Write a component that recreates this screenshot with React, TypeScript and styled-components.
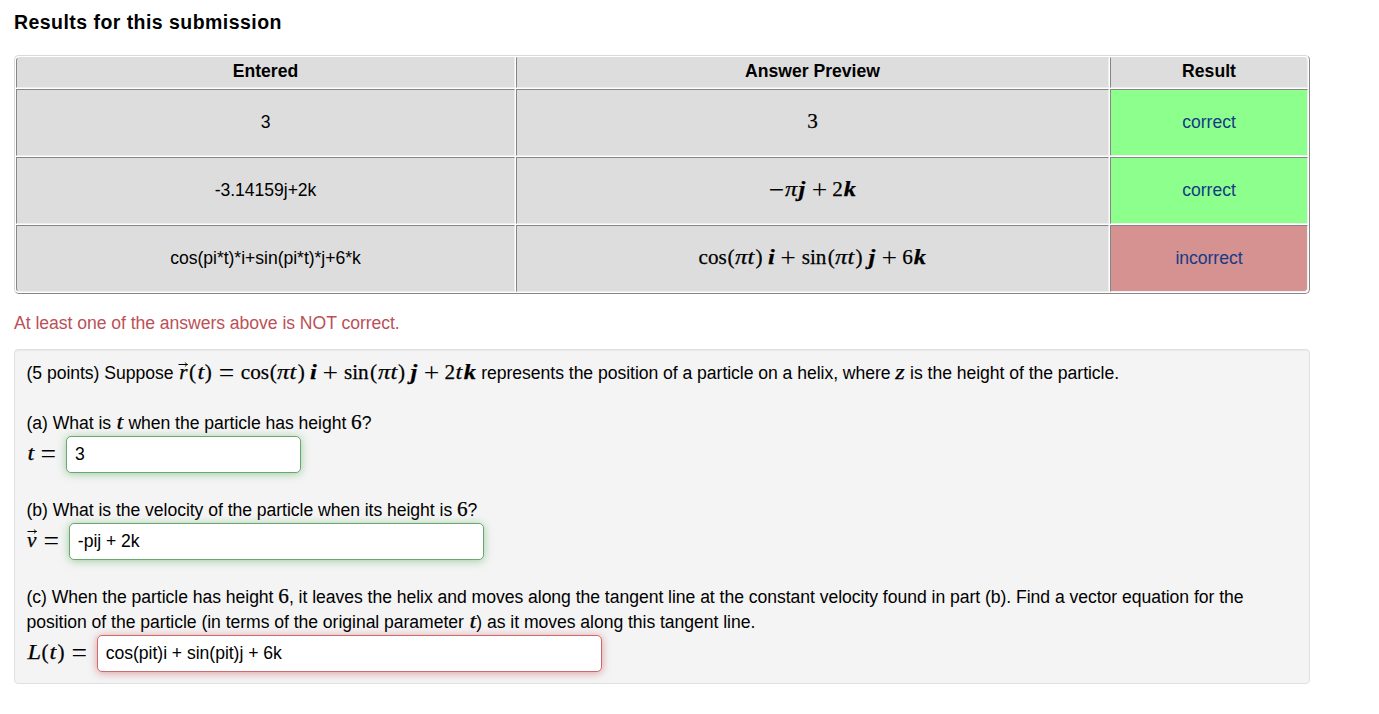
import React from 'react';
import styled, { createGlobalStyle } from 'styled-components';

const GlobalStyle = createGlobalStyle`
  body {
    margin: 0;
    background: #fff;
    color: #000;
    font: 17.6px/25px "Liberation Sans", Arial, sans-serif;
  }
`;

const Page = styled.main`
  box-sizing: border-box;
  width: 1310px;
  padding: 10px 0 0 14px;
`;

const Heading = styled.h3`
  margin: 0 0 20px;
  font-size: 19.5px;
  line-height: 25px;
  letter-spacing: 0.45px;
`;

const ResultsTable = styled.table`
  width: 1296px;
  table-layout: fixed;
  border: 1px solid;
  border-color: #d9d9d9 #868686 #868686 #d9d9d9;
  border-radius: 5px;
  border-collapse: separate;
  border-spacing: 1px;
`;

const Col = styled.col<{ $w: number }>`
  width: ${(p) => p.$w}px;
`;

const HeadCell = styled.th<{ $corner?: string }>`
  box-sizing: border-box;
  height: 31px;
  padding: 0 0 3px;
  border: 1px solid;
  border-color: #ddd #eee #eee #868686;
  border-radius: ${(p) => p.$corner || '0'};
  background: #ddd;
  line-height: 25px;
`;

const tones = { plain: '#ddd', good: '#8cff8c', bad: '#d69191' };

const Cell = styled.td<{ $tone?: keyof typeof tones; $corner?: string }>`
  box-sizing: border-box;
  height: 67px;
  padding: 0;
  border: 1px solid;
  border-color: #868686 #eee #eee #868686;
  border-radius: ${(p) => p.$corner || '0'};
  background: ${(p) => tones[p.$tone || 'plain']};
  letter-spacing: -0.04px;
  text-align: center;
`;

const ResultLink = styled.a`
  color: #153a85;
  text-decoration: none;
`;

const Message = styled.p`
  margin: 17px 0 13px;
  color: #bb5057;
  letter-spacing: -0.045px;
`;

const Problem = styled.section`
  box-sizing: border-box;
  width: 1296px;
  padding: 11px 11px 11px 11.5px;
  border: 1px solid #e0e0e0;
  border-radius: 4px;
  background: #f4f4f4;
  box-shadow: inset 0 1px 1px rgba(0, 0, 0, 0.05);
`;

const Line = styled.div<{ $gap?: boolean }>`
  height: 25px;
  margin-top: ${(p) => (p.$gap ? 25 : 0)}px;
  letter-spacing: -0.045px;
  white-space: nowrap;
`;

const AnswerRow = styled.div`
  display: flex;
  align-items: baseline;
  height: 37px;
`;

const AnswerInput = styled.input<{ $w: number; $ok?: boolean }>`
  box-sizing: border-box;
  width: ${(p) => p.$w}px;
  height: 37px;
  margin: 0 0 0 3.5px;
  padding: 0 8px 1px;
  border: 1px solid ${(p) => (p.$ok ? '#68a76e' : '#cb6a70')};
  border-radius: 5px;
  outline: none;
  background: #fff;
  color: #000;
  font: inherit;
  letter-spacing: -0.04px;
  box-shadow: 0 1px 8px ${(p) => (p.$ok ? 'rgba(70, 165, 75, 0.5)' : 'rgba(200, 60, 70, 0.5)')};
`;

const Math = styled.span`
  font-family: "Liberation Serif", "Times New Roman", serif;
  font-size: 21.2px;
  line-height: 0;
  letter-spacing: 0;
  white-space: nowrap;
  -webkit-text-stroke: 0.25px currentColor;
`;

const Sym = styled.span<{ $w: number; $italic?: boolean; $bold?: boolean; $gap?: number; $stretch?: number }>`
  position: relative;
  display: inline-block;
  width: ${(p) => p.$w}em;
  margin: 0 ${(p) => p.$gap || 0}em;
  font-style: ${(p) => (p.$italic ? 'italic' : 'normal')};
  font-weight: ${(p) => (p.$bold ? 700 : 400)};
  text-align: center;
  transform: scaleX(${(p) => p.$stretch || 1});
`;

const Wide = styled.span`
  display: inline-block;
  margin: 0 -0.2em;
  font-size: 1.3em;
  transform: translateY(0.1em);
  -webkit-text-stroke: 0;
`;

const VectorArrow = styled.svg<{ $top: number }>`
  position: absolute;
  left: 0;
  top: ${(p) => p.$top}px;
`;

const Thin = styled.span`
  display: inline-block;
  width: 0.167em;
`;

const Num = ({ children }: { children: string }) => <Sym $w={0.5}>{children}</Sym>;
const Var = ({ children, w = 0.361 }: { children: string; w?: number }) => (
  <Sym $w={w} $italic $stretch={1.15}>{children}</Sym>
);
const Vec = ({ children, w }: { children: string; w: number }) => (
  <Sym $w={w} $italic $bold $stretch={1.15}>{children}</Sym>
);
const Op = ({ children }: { children: string }) => <Sym $w={0.778} $gap={0.222}><Wide>{children}</Wide></Sym>;
const Equals = () => <Sym $w={0.778} $gap={0.278}><Wide>=</Wide></Sym>;
const Paren = ({ children }: { children: string }) => <Sym $w={0.389}>{children}</Sym>;

const Arrowed = ({ name, w, top }: { name: string; w: number; top: number }) => (
  <Sym $w={w} $italic>
    {name}
    <VectorArrow $top={top} width="10" height="6" viewBox="0 0 10 6" fill="none" stroke="#000" strokeWidth="1">
      <path d="M0.5 2.5h9M7.3 0.5C7.5 1.5 8.5 2.3 9.5 2.5C8.5 2.7 7.5 3.5 7.3 4.5" />
    </VectorArrow>
  </Sym>
);

const Trig = ({ fn, w }: { fn: string; w: number }) => (
  <>
    <Sym $w={w}>{fn}</Sym>
    <Paren>(</Paren>
    <Var w={0.57}>π</Var>
    <Var>t</Var>
    <Paren>)</Paren>
    <Thin />
  </>
);

const Helix = ({ children }: { children: React.ReactNode }) => (
  <>
    <Trig fn="cos" w={1.339} />
    <Vec w={0.404}>i</Vec>
    <Op>+</Op>
    <Trig fn="sin" w={1.228} />
    <Vec w={0.451}>j</Vec>
    <Op>+</Op>
    {children}
    <Vec w={0.646}>k</Vec>
  </>
);

export default function App() {
  return (
    <Page>
      <GlobalStyle />
      <Heading>Results for this submission</Heading>
      <ResultsTable>
        <colgroup><Col $w={499} /><Col $w={593} /><Col $w={198} /></colgroup>
        <thead>
          <tr>
            <HeadCell $corner="4px 0 0 0">Entered</HeadCell>
            <HeadCell>Answer Preview</HeadCell>
            <HeadCell $corner="0 4px 0 0">Result</HeadCell>
          </tr>
        </thead>
        <tbody>
          <tr>
            <Cell>3</Cell>
            <Cell><Math><Num>3</Num></Math></Cell>
            <Cell $tone="good"><ResultLink>correct</ResultLink></Cell>
          </tr>
          <tr>
            <Cell>-3.14159j+2k</Cell>
            <Cell>
              <Math>
                <Sym $w={0.778}><Wide>−</Wide></Sym>
                <Var w={0.57}>π</Var>
                <Vec w={0.451}>j</Vec>
                <Op>+</Op>
                <Num>2</Num>
                <Vec w={0.646}>k</Vec>
              </Math>
            </Cell>
            <Cell $tone="good"><ResultLink>correct</ResultLink></Cell>
          </tr>
          <tr>
            <Cell $corner="0 0 0 4px">cos(pi*t)*i+sin(pi*t)*j+6*k</Cell>
            <Cell><Math><Helix><Num>6</Num></Helix></Math></Cell>
            <Cell $tone="bad" $corner="0 0 4px 0"><ResultLink>incorrect</ResultLink></Cell>
          </tr>
        </tbody>
      </ResultsTable>
      <Message>At least one of the answers above is NOT correct.</Message>
      <Problem>
        <Line>
          (5 points) Suppose{' '}
          <Math>
            <Arrowed name="r" w={0.48} top={-10} />
            <Paren>(</Paren><Var>t</Var><Paren>)</Paren>
            <Equals />
            <Helix><Num>2</Num><Var>t</Var></Helix>
          </Math>{' '}
          represents the position of a particle on a helix, where <Math><Var w={0.468}>z</Var></Math> is the height of the particle.
        </Line>
        <Line $gap>
          (a) What is <Math><Var>t</Var></Math> when the particle has height <Math><Num>6</Num></Math>?
        </Line>
        <AnswerRow>
          <Math><Var>t</Var><Equals /></Math>
          <AnswerInput $w={235} $ok defaultValue="3" />
        </AnswerRow>
        <Line $gap>
          (b) What is the velocity of the particle when its height is <Math><Num>6</Num></Math>?
        </Line>
        <AnswerRow>
          <Math><Arrowed name="v" w={0.5} top={-11} /><Equals /></Math>
          <AnswerInput $w={415} $ok defaultValue="-pij + 2k" />
        </AnswerRow>
        <Line $gap>
          (c) When the particle has height <Math><Num>6</Num></Math>, it leaves the helix and moves along the tangent line at the
          constant velocity found in part (b). Find a vector equation for the
        </Line>
        <Line>
          position of the particle (in terms of the original parameter <Math><Var>t</Var></Math>) as it moves along this tangent line.
        </Line>
        <AnswerRow>
          <Math><Var w={0.681}>L</Var><Paren>(</Paren><Var>t</Var><Paren>)</Paren><Equals /></Math>
          <AnswerInput $w={505} defaultValue="cos(pit)i + sin(pit)j + 6k" />
        </AnswerRow>
      </Problem>
    </Page>
  );
}
